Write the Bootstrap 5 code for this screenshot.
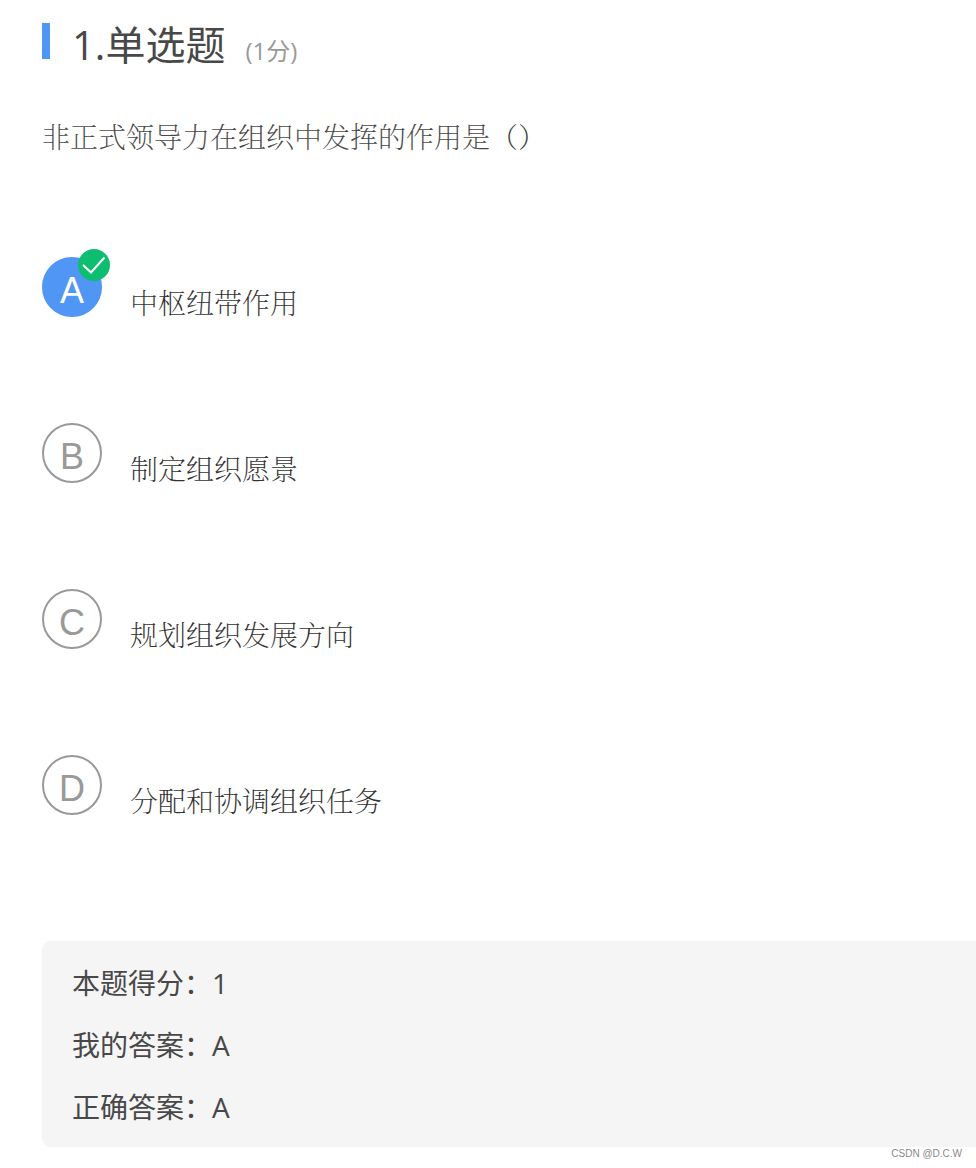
<!DOCTYPE html>
<html lang="zh-CN">
<head>
<meta charset="utf-8">
<meta name="viewport" content="width=device-width, initial-scale=1">
<title>单选题</title>
<link href="https://cdn.jsdelivr.net/npm/bootstrap@5.3.0/dist/css/bootstrap.min.css" rel="stylesheet">
<style>
  body { font-family: "Open Sans", "Noto Sans CJK SC", sans-serif; color: #484848; background: #fff; }
  .quiz { padding: 15px 0 0 42px; }
  .quiz-title { font-size: 40px; line-height: 60px; font-weight: 400; }
  .title-bar { width: 8px; height: 36px; margin: 8px 22px 0 0; background: #5096f5; }
  .points { font-size: 24px; color: #999; margin-left: 20px; }
  .song { font-family: "Noto Serif CJK SC", "Noto Sans CJK SC", serif; font-size: 28px; line-height: 40px; font-weight: 200; }
  .question { margin: 35px 0 0; color: #484848; }
  .options { margin: 101px 0 0; gap: 106px; }
  .option { height: 60px; color: #333; cursor: pointer; }
  .letter { width: 60px; height: 60px; margin-right: 28px; padding-top: 8px; border: 2px solid #999; color: #999;
    font: 36px/1 "Liberation Sans", Arial, sans-serif; }
  .btn-check:checked + .option .letter { background: #5096f5; border-color: #5096f5; color: #fff; }
  .btn-check:focus-visible + .option .letter { outline: 3px solid #bcd6fb; }
  .tick { top: -8px; left: 36px; }
  .option-text { padding-top: 25px; }
  .result { margin: 126px 0 0; padding: 11px 30px 9px; background: #f5f5f5; border-radius: 8px 0 0 8px; font-size: 28px; line-height: 62px; }
  .credit { font: 10px/14px "Liberation Sans", Arial, sans-serif; color: #888; padding-right: 14px; }
</style>
</head>
<body>
<main class="quiz">
  <header class="d-flex align-items-start">
    <span class="title-bar flex-shrink-0"></span>
    <h1 class="quiz-title mb-0">1.单选题<span class="points">(1分)</span></h1>
  </header>
  <form>
    <p class="song question" id="question">非正式领导力在组织中发挥的作用是（）</p>
    <div class="options d-flex flex-column align-items-start" role="radiogroup" aria-labelledby="question">
      <div>
        <input class="btn-check" type="radio" name="answer" id="optA" value="A" checked>
        <label class="option d-flex position-relative" for="optA">
          <span class="letter rounded-circle d-flex justify-content-center align-items-center flex-shrink-0">A</span>
          <svg class="tick position-absolute" width="32" height="32" viewBox="0 0 32 32" aria-hidden="true"><circle cx="16" cy="16" r="16" fill="#0dbd70"/><path d="M5 16 13 23.500 26.500 8.500" fill="none" stroke="#fff" stroke-width="2"/></svg>
          <span class="song option-text">中枢纽带作用</span>
        </label>
      </div>
      <div>
        <input class="btn-check" type="radio" name="answer" id="optB" value="B">
        <label class="option d-flex" for="optB">
          <span class="letter rounded-circle d-flex justify-content-center align-items-center flex-shrink-0">B</span>
          <span class="song option-text">制定组织愿景</span>
        </label>
      </div>
      <div>
        <input class="btn-check" type="radio" name="answer" id="optC" value="C">
        <label class="option d-flex" for="optC">
          <span class="letter rounded-circle d-flex justify-content-center align-items-center flex-shrink-0">C</span>
          <span class="song option-text">规划组织发展方向</span>
        </label>
      </div>
      <div>
        <input class="btn-check" type="radio" name="answer" id="optD" value="D">
        <label class="option d-flex" for="optD">
          <span class="letter rounded-circle d-flex justify-content-center align-items-center flex-shrink-0">D</span>
          <span class="song option-text">分配和协调组织任务</span>
        </label>
      </div>
    </div>
  </form>
  <section class="result">
    <div>本题得分：1</div>
    <div>我的答案：A</div>
    <div>正确答案：A</div>
  </section>
</main>
<footer class="credit text-end">CSDN @D.C.W</footer>
<script src="https://cdn.jsdelivr.net/npm/bootstrap@5.3.0/dist/js/bootstrap.bundle.min.js"></script>
</body>
</html>
